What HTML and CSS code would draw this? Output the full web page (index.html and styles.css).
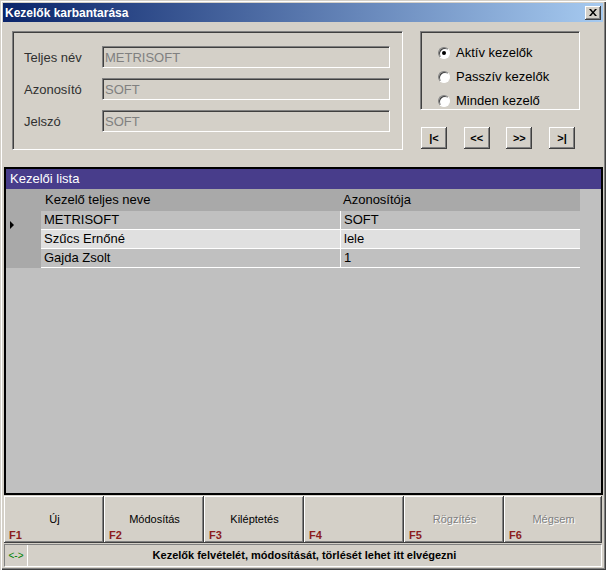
FILE: index.html
```html
<!DOCTYPE html>
<html lang="hu">
<head>
<meta charset="utf-8">
<title>Kezelők karbantarása</title>
<link rel="stylesheet" href="styles.css">
</head>
<body>
<div class="window">
  <div class="titlebar">
    <span class="title">Kezelők karbantarása</span>
    <span class="close"><svg width="8" height="7" viewBox="0 0 8 7"><path d="M0 0h2l2 2.5L6 0h2L5 3.5 8 7H6L4 4.5 2 7H0l3-3.5z" fill="#000"/></svg></span>
  </div>
  <div class="top">
    <div class="group fields">
      <div class="field"><span class="lbl">Teljes név</span><div class="input">METRISOFT</div></div>
      <div class="field"><span class="lbl">Azonosító</span><div class="input">SOFT</div></div>
      <div class="field"><span class="lbl">Jelszó</span><div class="input">SOFT</div></div>
    </div>
    <div class="side">
      <div class="group radios">
        <div class="opt"><span class="radio checked"></span><span>Aktív kezelők</span></div>
        <div class="opt"><span class="radio"></span><span>Passzív kezelők</span></div>
        <div class="opt"><span class="radio"></span><span>Minden kezelő</span></div>
      </div>
      <div class="nav">
        <div class="nbtn">|&lt;</div>
        <div class="nbtn">&lt;&lt;</div>
        <div class="nbtn">&gt;&gt;</div>
        <div class="nbtn">&gt;|</div>
      </div>
    </div>
  </div>
  <div class="panel">
    <div class="caption">Kezelői lista</div>
    <div class="table">
      <div class="row head"><div class="ind"></div><div class="c1">Kezelő teljes neve</div><div class="c2">Azonosítója</div></div>
      <div class="row odd"><div class="ind"><svg width="5" height="8" viewBox="0 0 5 8"><path d="M0 0L4 4L0 8z" fill="#000"/></svg></div><div class="c1">METRISOFT</div><div class="c2">SOFT</div></div>
      <div class="row even"><div class="ind"></div><div class="c1">Szűcs Ernőné</div><div class="c2">lele</div></div>
      <div class="row odd"><div class="ind"></div><div class="c1">Gajda Zsolt</div><div class="c2">1</div></div>
    </div>
  </div>
  <div class="buttons">
    <div class="btn"><span class="bl">Új</span><span class="fk">F1</span></div>
    <div class="btn"><span class="bl">Módosítás</span><span class="fk">F2</span></div>
    <div class="btn"><span class="bl">Kiléptetés</span><span class="fk">F3</span></div>
    <div class="btn"><span class="bl"></span><span class="fk">F4</span></div>
    <div class="btn disabled"><span class="bl">Rögzítés</span><span class="fk">F5</span></div>
    <div class="btn disabled"><span class="bl">Mégsem</span><span class="fk">F6</span></div>
  </div>
  <div class="status">
    <div class="s-left">&lt;-&gt;</div>
    <div class="s-msg">Kezelők felvételét, módosítását, törlését lehet itt elvégezni</div>
  </div>
</div>
</body>
</html>
```
FILE: styles.css
```css
* { box-sizing: border-box; }
html, body { margin: 0; padding: 0; }
body {
  width: 606px;
  height: 570px;
  overflow: hidden;
  background: #d4d0c8;
  font-family: "Liberation Sans", Arial, sans-serif;
  font-size: 13px;
  color: #000;
}
.window {
  width: 606px;
  height: 570px;
  padding: 3px;
  display: flex;
  flex-direction: column;
  background: #d4d0c8;
  box-shadow: inset 1px 1px #d4d0c8, inset 2px 2px #ffffff, inset -1px -1px #404040, inset -2px -2px #808080;
}
.titlebar {
  flex: none;
  height: 19px;
  display: flex;
  align-items: center;
  justify-content: space-between;
  padding: 0 2px 0 2px;
  background: linear-gradient(to right, #0a246a, #a6caf0);
  color: #fff;
  font-weight: bold;
  font-size: 12px;
}
.close {
  width: 16px;
  height: 14px;
  display: flex;
  align-items: center;
  justify-content: center;
  background: #d4d0c8;
  box-shadow: inset -1px -1px #404040, inset 1px 1px #ffffff, inset -2px -2px #808080;
}
.top {
  flex: none;
  height: 145px;
  display: flex;
  gap: 17px;
  padding: 9px 0 0 9px;
}
.group {
  border-top: 1px solid #808080;
  border-left: 1px solid #808080;
  border-right: 1px solid #ffffff;
  border-bottom: 1px solid #ffffff;
  box-shadow: inset 1px 1px #404040;
}
.fields {
  width: 391px;
  height: 119px;
  padding: 14px 0 0 11px;
  display: flex;
  flex-direction: column;
  gap: 10px;
}
.field {
  display: flex;
  align-items: center;
  height: 22px;
}
.lbl {
  width: 78px;
  color: #303030;
}
.input {
  width: 288px;
  height: 22px;
  padding: 2px 0 0 2px;
  line-height: 18px;
  color: #808080;
  border-top: 1px solid #808080;
  border-left: 1px solid #808080;
  border-right: 1px solid #ffffff;
  border-bottom: 1px solid #ffffff;
  box-shadow: inset 1px 1px #404040;
}
.side {
  width: 160px;
  display: flex;
  flex-direction: column;
}
.radios {
  height: 79px;
  padding: 12px 0 0 17px;
  display: flex;
  flex-direction: column;
  gap: 7px;
}
.opt {
  display: flex;
  align-items: center;
  gap: 6px;
  height: 18px;
}
.radio {
  width: 12px;
  height: 12px;
  border-radius: 50%;
  background: #fff;
  border: 1px solid;
  border-color: #808080 #ffffff #ffffff #808080;
  box-shadow: inset 1px 1px #404040;
  display: flex;
  align-items: center;
  justify-content: center;
}
.radio.checked::after {
  content: "";
  width: 4px;
  height: 4px;
  border-radius: 50%;
  background: #000;
}
.nav {
  margin-top: 17px;
  width: 155px;
  padding-left: 1px;
  display: flex;
  justify-content: space-between;
}
.nbtn {
  width: 26px;
  height: 22px;
  display: flex;
  align-items: center;
  justify-content: center;
  font-weight: bold;
  font-size: 11px;
  background: #d4d0c8;
  box-shadow: inset -1px -1px #404040, inset 1px 1px #ffffff, inset -2px -2px #808080;
}
.panel {
  flex: none;
  height: 328px;
  margin-left: 1px;
  border: 2px solid #000;
  background: #c0c0c0;
  display: flex;
  flex-direction: column;
}
.caption {
  height: 20px;
  line-height: 20px;
  padding-left: 4px;
  background: #483d8b;
  color: #fff;
}
.table {
  width: 574px;
  display: flex;
  flex-direction: column;
}
.row {
  display: flex;
  height: 19px;
  line-height: 18px;
}
.row.head {
  height: 22px;
  line-height: 22px;
  background: #a9a9a9;
}
.ind {
  width: 35px;
  flex: none;
  background: #a9a9a9;
  padding: 5px 0 0 4px;
}
.head .ind { padding: 0; }
.c1 {
  width: 299px;
  flex: none;
  padding-left: 3px;
}
.c2 {
  flex: 1;
  padding-left: 3px;
}
.head .c1 { padding-left: 4px; }
.row.odd .c1, .row.odd .c2 { background: #c0c0c0; }
.row.even .c1, .row.even .c2 { background: #e0e0e0; }
.row:not(.head) .c1, .row:not(.head) .c2 { border-bottom: 1px solid #fff; }
.row:not(.head) .c2 { border-left: 1px solid #fff; }
.buttons {
  flex: none;
  height: 47px;
  margin: 1px 0 0 1px;
  display: flex;
}
.btn {
  width: 100px;
  flex: none;
  display: flex;
  flex-direction: column;
  padding: 16px 4px 1px 5px;
  font-size: 11px;
  background: #d4d0c8;
  box-shadow: inset -1px -1px #404040, inset 1px 1px #ffffff, inset -2px -2px #808080;
}
.btn:last-child { width: 98px; }
.bl {
  height: 14px;
  line-height: 14px;
  text-align: center;
}
.fk {
  margin-top: 3px;
  line-height: 13px;
  font-weight: bold;
  color: #8c1c1c;
}
.btn.disabled .bl {
  color: #808080;
  text-shadow: 1px 1px #ffffff;
}
.status {
  flex: none;
  height: 23px;
  margin: 1px 1px 0 1px;
  display: flex;
  border-top: 1px solid #808080;
  border-left: 1px solid #808080;
  border-right: 1px solid #ffffff;
  border-bottom: 1px solid #ffffff;
}
.s-left {
  width: 23px;
  flex: none;
  border-right: 1px solid #ffffff;
  color: #008000;
  font-size: 10px;
  line-height: 21px;
  text-align: center;
}
.s-msg {
  flex: 1;
  text-align: center;
  padding-right: 20px;
  font-weight: bold;
  font-size: 11px;
  line-height: 21px;
}
```
